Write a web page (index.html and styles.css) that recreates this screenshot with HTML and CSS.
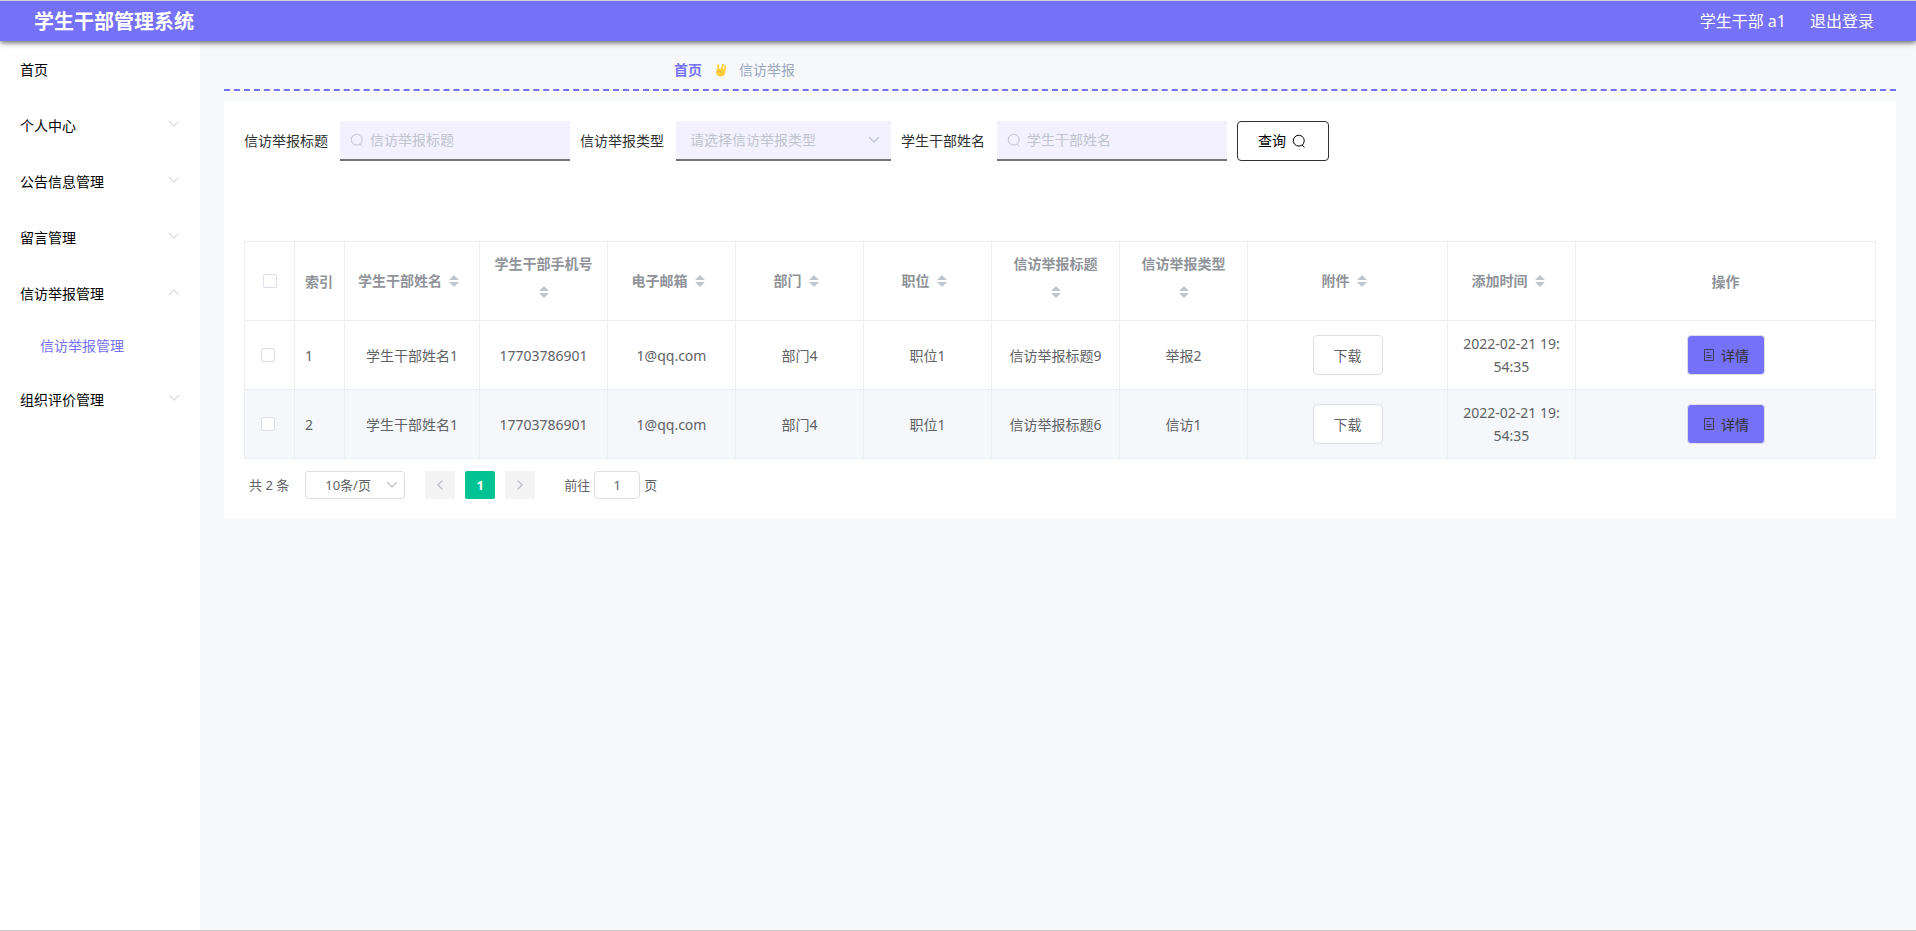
FILE: index.html
```html
<!DOCTYPE html>
<html lang="zh-CN">
<head>
<meta charset="utf-8">
<title>学生干部管理系统</title>
<link rel="stylesheet" href="styles.css">
</head>
<body>
<svg class="sprite" aria-hidden="true">
  <symbol id="chevron" viewBox="0 0 14 14"><path d="M2.500 4.500 7 9l4.500-4.500" fill="none" stroke="currentColor" stroke-width="1.300" stroke-linecap="round"/></symbol>
  <symbol id="search" viewBox="0 0 14 14"><path d="M9.300 11.600A5.500 5.500 0 1 1 11.600 9.300C11.300 10.300 10.800 10.900 10.200 11.300M9.900 11.100l2.300 2" fill="none" stroke="currentColor" stroke-linecap="round"/></symbol>
  <symbol id="doc" viewBox="0 0 14 14"><path d="M2.500 1.500h9v11h-9zM4.500 4.500h3M4.500 7.500h5M4.500 9.500h5" fill="none" stroke="currentColor" stroke-opacity=".8"/></symbol>
  <symbol id="sort" viewBox="0 0 10 12"><path d="M5 0l5 5H0zM5 12l5-5H0z" fill="currentColor"/></symbol>
  <symbol id="arrow" viewBox="0 0 12 12"><path d="M8 2 4 6l4 4" fill="none" stroke="currentColor" stroke-width="1.600" stroke-linecap="round"/></symbol>
</svg>
<header class="topbar">
  <h1 class="brand">学生干部管理系统</h1>
  <div class="user"><span>学生干部 a1</span><a href="#">退出登录</a></div>
</header>
<div class="layout">
  <nav class="sidebar">
    <a class="menu-item menu-home" href="#">首页</a>
    <button class="menu-item">个人中心<svg class="menu-arrow"><use href="#chevron"/></svg></button>
    <button class="menu-item">公告信息管理<svg class="menu-arrow"><use href="#chevron"/></svg></button>
    <button class="menu-item">留言管理<svg class="menu-arrow"><use href="#chevron"/></svg></button>
    <button class="menu-item" aria-expanded="true">信访举报管理<svg class="menu-arrow menu-arrow-open"><use href="#chevron"/></svg></button>
    <a class="menu-sub" href="#">信访举报管理</a>
    <button class="menu-item">组织评价管理<svg class="menu-arrow"><use href="#chevron"/></svg></button>
  </nav>
  <main class="main">
    <nav class="breadcrumb">
      <a href="#">首页</a>
      <svg class="hand" viewBox="0 0 14 14" aria-hidden="true"><path d="M5 7 4.300 2M8 7 9.800 1.200M11.300 7.500 12.200 3" fill="none" stroke="#ffcf3a" stroke-width="2" stroke-linecap="round"/><path d="M2.800 6.200Q7 4.800 12.200 6.500L12 10.800Q11 14 7.500 14 3.500 14 2.300 10.500Z" fill="#ffcf3a"/><path d="M3 9.200 6.500 8l2 2.200" fill="none" stroke="#eeac2d" stroke-linecap="round"/></svg>
      <span>信访举报</span>
    </nav>
    <section class="card">
      <form class="search">
        <div class="field">
          <label for="title">信访举报标题</label>
          <div class="control"><svg class="icon"><use href="#search"/></svg><input id="title" type="text" placeholder="信访举报标题"></div>
        </div>
        <div class="field">
          <label for="type">信访举报类型</label>
          <div class="control control-select"><select id="type"><option>请选择信访举报类型</option></select><svg class="icon"><use href="#chevron"/></svg></div>
        </div>
        <div class="field">
          <label for="name">学生干部姓名</label>
          <div class="control"><svg class="icon"><use href="#search"/></svg><input id="name" type="text" placeholder="学生干部姓名"></div>
        </div>
        <button class="query" type="button">查询<svg class="icon"><use href="#search"/></svg></button>
      </form>
      <table class="grid">
        <colgroup><col class="c-check"><col class="c-index"><col class="c-name"><col class="c-std"><col class="c-std"><col class="c-std"><col class="c-std"><col class="c-std"><col class="c-std"><col class="c-file"><col class="c-std"><col class="c-ops"></colgroup>
        <thead>
          <tr>
            <th><input type="checkbox" aria-label="全选"></th>
            <th class="left">索引</th>
            <th><div class="head">学生干部姓名<span class="sort"><svg><use href="#sort"/></svg></span></div></th>
            <th><div class="head">学生干部手机号<span class="sort"><svg><use href="#sort"/></svg></span></div></th>
            <th><div class="head">电子邮箱<span class="sort"><svg><use href="#sort"/></svg></span></div></th>
            <th><div class="head">部门<span class="sort"><svg><use href="#sort"/></svg></span></div></th>
            <th><div class="head">职位<span class="sort"><svg><use href="#sort"/></svg></span></div></th>
            <th><div class="head">信访举报标题<span class="sort"><svg><use href="#sort"/></svg></span></div></th>
            <th><div class="head">信访举报类型<span class="sort"><svg><use href="#sort"/></svg></span></div></th>
            <th><div class="head">附件<span class="sort"><svg><use href="#sort"/></svg></span></div></th>
            <th><div class="head">添加时间<span class="sort"><svg><use href="#sort"/></svg></span></div></th>
            <th>操作</th>
          </tr>
        </thead>
        <tbody>
          <tr>
            <td class="check"><input type="checkbox" aria-label="选择第1行"></td><td class="left">1</td><td>学生干部姓名1</td><td>17703786901</td><td>1@qq.com</td><td>部门4</td><td>职位1</td><td>信访举报标题9</td><td>举报2</td>
            <td><button class="btn">下载</button></td><td>2022-02-21 19:<wbr>54:35</td><td><button class="btn btn-detail"><svg class="icon"><use href="#doc"/></svg>详情</button></td>
          </tr>
          <tr>
            <td class="check"><input type="checkbox" aria-label="选择第2行"></td><td class="left">2</td><td>学生干部姓名1</td><td>17703786901</td><td>1@qq.com</td><td>部门4</td><td>职位1</td><td>信访举报标题6</td><td>信访1</td>
            <td><button class="btn">下载</button></td><td>2022-02-21 19:<wbr>54:35</td><td><button class="btn btn-detail"><svg class="icon"><use href="#doc"/></svg>详情</button></td>
          </tr>
        </tbody>
      </table>
      <div class="pager">
        <span>共 2 条</span>
        <div class="page-size"><select aria-label="每页条数"><option>10条/页</option></select><svg class="icon"><use href="#chevron"/></svg></div>
        <div class="pages">
          <button class="page" disabled aria-label="上一页"><svg><use href="#arrow"/></svg></button>
          <button class="page page-current">1</button>
          <button class="page page-next" disabled aria-label="下一页"><svg><use href="#arrow"/></svg></button>
        </div>
        <label class="jump">前往<input type="text" value="1">页</label>
      </div>
    </section>
  </main>
</div>
</body>
</html>
```
FILE: styles.css
```css
* { box-sizing: border-box; }
body {
  margin: 0;
  min-height: 100vh;
  display: flex;
  flex-direction: column;
  border-top: 1px solid #d4d4d8;
  border-bottom: 1px solid #c8c8c8;
  background: #f7f8fa;
  color: #303133;
  font: 14px/22px "Noto Sans", "Noto Sans CJK SC", sans-serif;
}
button, input, select { font: inherit; color: inherit; margin: 0; }
button { cursor: pointer; }
a { color: inherit; text-decoration: none; }
.sprite { display: none; }
.icon { width: 14px; height: 14px; flex: none; }

.topbar {
  position: relative;
  display: flex;
  align-items: center;
  justify-content: space-between;
  height: 40px;
  padding: 0 42px 0 34px;
  background: #7571f9;
  color: #fff;
  box-shadow: 0 1px 6px #444;
}
.brand { margin: 0; padding-top: 2px; font-size: 20px; font-weight: 700; }
.user { display: flex; gap: 24px; font-size: 16px; }

.layout { flex: 1; display: flex; }
.sidebar {
  width: 200px;
  flex: none;
  display: flex;
  flex-direction: column;
  background: #fff;
  color: #000;
}
.menu-item {
  display: flex;
  align-items: center;
  justify-content: space-between;
  height: 56px;
  padding: 0 19px 0 20px;
  border: 0;
  background: none;
}
.menu-home { height: 57px; }
.menu-arrow { width: 14px; height: 14px; margin-bottom: 4px; color: #dcdfe6; }
.menu-arrow-open { transform: rotate(180deg); }
.menu-sub {
  height: 50px;
  padding-left: 40px;
  color: #7571f9;
  line-height: 48px;
}

.main { flex: 1; min-width: 0; padding: 0 20px 0 24px; }
.breadcrumb {
  display: flex;
  align-items: center;
  gap: 12px;
  height: 50px;
  padding: 10px 0 0 450px;
  border-bottom: 2px dashed #7571f9;
  color: #97a8be;
}
.breadcrumb a { color: #7571f9; font-weight: 700; }
.hand { width: 13px; height: 14px; }

.card { margin-top: 10px; padding: 20px; background: #fff; }
.search { display: flex; gap: 10px; margin-bottom: 80px; }
.field { display: flex; align-items: center; gap: 12px; white-space: nowrap; }
.control {
  display: flex;
  align-items: center;
  gap: 6px;
  width: 230px;
  height: 40px;
  padding: 0 10px;
  border-bottom: 2px solid #747474;
  background: #f3f1ff;
  color: #c0c4cc;
}
.control-select { width: 215px; padding-left: 14px; }
.control input, .control select {
  flex: 1;
  min-width: 0;
  padding: 0;
  border: 0;
  outline: 0;
  background: none;
  appearance: none;
}
.control input::placeholder { color: #c0c4cc; opacity: 1; }
.query {
  display: flex;
  align-items: center;
  gap: 6px;
  width: 92px;
  height: 40px;
  padding: 0 20px;
  border: 1px solid #303133;
  border-radius: 4px;
  background: #fff;
  color: #000;
}

.grid {
  width: 100%;
  table-layout: fixed;
  border-collapse: collapse;
  border: 1px solid #ebeef5;
  color: #606266;
}
.c-check, .c-index { width: 50px; }
.c-name { width: 135px; }
.c-std { width: 128px; }
.c-file { width: 200px; }
.c-ops { width: 300px; }
.grid th, .grid td {
  padding: 11px 10px;
  border: 1px solid #ebeef5;
  text-align: center;
  line-height: 23px;
}
.grid th { padding: 11px 10px; color: #909399; font-weight: 700; }
.grid .left { text-align: left; white-space: nowrap; }
.grid .check { padding: 11px 14px 11px 10px; }
.grid tbody tr { height: 69px; }
.grid tbody tr:nth-child(even) { background: #f5f7fa; }
.head {
  display: flex;
  flex-wrap: wrap;
  align-items: center;
  justify-content: center;
  line-height: 22px;
}
.sort {
  display: flex;
  align-items: center;
  justify-content: center;
  width: 24px;
  height: 34px;
  color: #c0c4cc;
}
.sort svg { width: 10px; height: 12px; }
.grid input {
  appearance: none;
  display: block;
  width: 14px;
  height: 14px;
  margin: 0 auto;
  border: 1px solid #dcdfe6;
  border-radius: 2px;
  background: #fff;
}
.btn {
  display: inline-flex;
  align-items: center;
  justify-content: center;
  gap: 5px;
  width: 70px;
  height: 40px;
  border: 1px solid #dcdfe6;
  border-radius: 4px;
  background: #fff;
  vertical-align: middle;
}
.btn-detail { width: 78px; background: #7571f9; color: #333; }

.pager {
  display: flex;
  align-items: center;
  margin-top: 12px;
  padding-left: 5px;
  color: #606266;
  font-size: 13px;
}
.page-size {
  display: flex;
  align-items: center;
  width: 100px;
  height: 28px;
  margin: 0 20px 0 16px;
  padding-right: 5px;
  border: 1px solid #dcdfe6;
  border-radius: 3px;
}
.page-size select {
  flex: 1;
  min-width: 0;
  padding: 0 0 0 19px;
  border: 0;
  background: none;
  appearance: none;
}
.page-size .icon { color: #c0c4cc; }
.pages { display: flex; gap: 10px; }
.page {
  display: flex;
  align-items: center;
  justify-content: center;
  width: 30px;
  height: 28px;
  padding: 0;
  border: 0;
  border-radius: 2px;
  background: #f4f4f5;
  color: #c0c4cc;
}
.page svg { width: 12px; height: 12px; }
.page-current { background: #00c292; color: #fff; font-weight: 700; }
.page-next svg { transform: rotate(180deg); }
.jump { display: flex; align-items: center; gap: 4px; margin-left: 29px; }
.jump input {
  width: 46px;
  height: 28px;
  padding: 0;
  border: 1px solid #dcdfe6;
  border-radius: 4px;
  text-align: center;
}
```
